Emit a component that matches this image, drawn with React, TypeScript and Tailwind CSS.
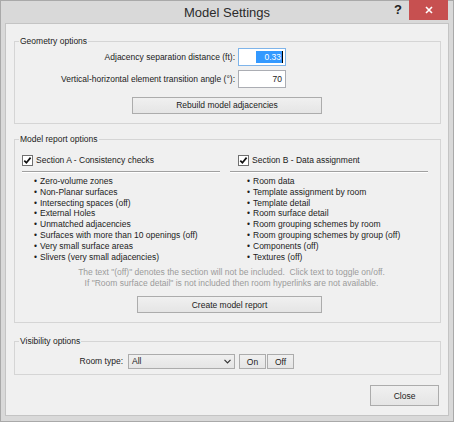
import React from 'react';

const sectionA = [
  'Zero-volume zones',
  'Non-Planar surfaces',
  'Intersecting spaces (off)',
  'External Holes',
  'Unmatched adjacencies',
  'Surfaces with more than 10 openings (off)',
  'Very small surface areas',
  'Slivers (very small adjacencies)',
];

const sectionB = [
  'Room data',
  'Template assignment by room',
  'Template detail',
  'Room surface detail',
  'Room grouping schemes by room',
  'Room grouping schemes by group (off)',
  'Components (off)',
  'Textures (off)',
];

const btn =
  'border border-[#acacac] bg-gradient-to-b from-[#f0f0f0] to-[#e5e5e5] text-[#1b1b1b] leading-none flex items-center justify-center';

function GroupBox({
  title,
  className = '',
  children,
}: {
  title: string;
  className?: string;
  children: React.ReactNode;
}) {
  return (
    <fieldset className={`ml-[8px] w-[427px] border border-[#d5d5d5] ${className}`}>
      <legend className="ml-[4px] px-[1px] leading-[10px]">{title}</legend>
      {children}
    </fieldset>
  );
}

function CheckBox() {
  return (
    <span className="flex h-[11px] w-[11px] items-center justify-center border border-[#707070] bg-white">
      <svg width="9" height="9" viewBox="0 0 9 9">
        <path d="M1.3 4.6 L3.4 6.8 L7.6 1.6" stroke="#111" strokeWidth="1.7" fill="none" />
      </svg>
    </span>
  );
}

function Section({
  title,
  items,
  boxIndent,
  listIndent,
}: {
  title: string;
  items: string[];
  boxIndent: string;
  listIndent: string;
}) {
  return (
    <div className="w-[198px]">
      <div className={`flex h-[11px] items-center gap-[3px] ${boxIndent}`}>
        <CheckBox />
        <span className="leading-[11px]">{title}</span>
      </div>
      <div className="mt-[5px] h-[2px] border-t border-[#a0a0a0] bg-white" />
      <ul className={`mt-[3px] ${listIndent}`}>
        {items.map((t) => (
          <li key={t} className="flex leading-[10.8px]">
            <span className="w-[6px]">•</span>
            {t}
          </li>
        ))}
      </ul>
    </div>
  );
}

export default function App() {
  return (
    <div className="flex h-[422px] w-[454px] flex-col border border-[#a9a9a9] bg-[#d9d9d9] font-['Liberation_Sans',Arial,sans-serif] text-[8.5px] text-[#1b1b1b]">
      {/* caption bar */}
      <div className="grid h-[22px] grid-cols-[1fr_auto_1fr]">
        <div />
        <div className="pt-[3px] text-[13px] leading-[18px] text-[#2b2b2b]">Model Settings</div>
        <div className="mr-[5px] flex items-start justify-end">
          <span className="mr-[7px] mt-[2px] text-[13px] font-bold leading-[14px] text-[#222]">?</span>
          <span className="mt-[-1px] flex h-[20px] w-[39px] items-center justify-center bg-[#c75050]">
            <svg width="8" height="8" viewBox="0 0 8 8">
              <path d="M1 1 L7 7 M7 1 L1 7" stroke="#fff" strokeWidth="1.6" />
            </svg>
          </span>
        </div>
      </div>

      {/* client area */}
      <div className="ml-[4px] h-[393px] w-[444px] border border-[#c4c4c4] bg-[#f0f0f0]">
        <GroupBox title="Geometry options" className="mt-[12px] pb-[9px]">
          <div className="mt-[2px] flex items-center">
            <div className="w-[220px] text-right">Adjacency separation distance (ft):</div>
            <div className="ml-[3px] flex h-[18px] w-[48px] items-center justify-end border border-[#7eb4ea] bg-white pr-[2px]">
              <span className="flex h-[12px] items-center bg-[#3399ff] pl-[8px] pr-[1px] text-white">0.33</span>
              <span className="h-[12px] w-[1px] bg-black" />
            </div>
          </div>
          <div className="mt-[4px] flex items-center">
            <div className="w-[220px] text-right">Vertical-horizontal element transition angle (°):</div>
            <div className="ml-[3px] flex h-[18px] w-[48px] items-center justify-end border border-[#abadb3] bg-white pr-[3px]">
              70
            </div>
          </div>
          <button className={`${btn} ml-[117px] mt-[9px] h-[17px] w-[190px]`}>Rebuild model adjacencies</button>
        </GroupBox>

        <GroupBox title="Model report options" className="mt-[10px] pb-[9px]">
          <div className="mt-[11px] flex gap-[10px] pl-[7px]">
            <Section title="Section A - Consistency checks" items={sectionA} boxIndent="" listIndent="pl-[12px]" />
            <Section title="Section B - Data assignment" items={sectionB} boxIndent="pl-[8px]" listIndent="pl-[17px]" />
          </div>
          <div className="mt-[5px] pl-[8px] text-center leading-[11px] text-[#9b9b9b]">
            <div>The text "(off)" denotes the section will not be included.&nbsp; Click text to toggle on/off.</div>
            <div>If "Room surface detail" is not included then room hyperlinks are not available.</div>
          </div>
          <button className={`${btn} ml-[122px] mt-[7px] h-[17px] w-[185px]`}>Create model report</button>
        </GroupBox>

        <GroupBox title="Visibility options" className="mt-[13px] pb-[5px]">
          <div className="mt-[7px] flex items-center">
            <div className="w-[108px] text-right">Room type:</div>
            <div className={`${btn} ml-[5px] h-[15px] w-[107px] !justify-between px-[3px]`}>
              <span>All</span>
              <svg width="7" height="5" viewBox="0 0 7 5">
                <path d="M0.5 0.8 L3.5 3.8 L6.5 0.8" stroke="#333" strokeWidth="1.2" fill="none" />
              </svg>
            </div>
            <button className={`${btn} ml-[4px] mt-[1px] h-[15px] w-[27px]`}>On</button>
            <button className={`${btn} ml-[1px] mt-[1px] h-[15px] w-[27px]`}>Off</button>
          </div>
        </GroupBox>

        <div className="mt-[10px] flex justify-end pr-[9px]">
          <button className={`${btn} h-[21px] w-[69px]`}>Close</button>
        </div>
      </div>
    </div>
  );
}
